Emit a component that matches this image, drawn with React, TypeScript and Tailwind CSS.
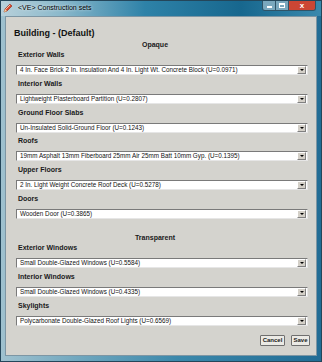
import React from "react";

const opaque: [string, string][] = [
  ["Exterior Walls", "4 In. Face Brick 2 In. Insulation And 4 In. Light Wt. Concrete Block (U=0.0971)"],
  ["Interior Walls", "Lightweight Plasterboard Partition (U=0.2807)"],
  ["Ground Floor Slabs", "Un-Insulated Solid-Ground Floor (U=0.1243)"],
  ["Roofs", "19mm Asphalt 13mm Fiberboard 25mm Air 25mm Batt 10mm Gyp. (U=0.1395)"],
  ["Upper Floors", "2 In. Light Weight Concrete Roof Deck (U=0.5278)"],
  ["Doors", "Wooden Door (U=0.3865)"],
];

const transparent: [string, string][] = [
  ["Exterior Windows", "Small Double-Glazed Windows (U=0.5584)"],
  ["Interior Windows", "Small Double-Glazed Windows (U=0.4335)"],
  ["Skylights", "Polycarbonate Double-Glazed Roof Lights (U=0.6569)"],
];

function Combo({ text }: { text: string }) {
  return (
    <div className="mt-[5px] h-[10px] flex items-center bg-white border border-t-[#7a7a7a] border-l-[#7a7a7a] border-b-[#e6e6e6] border-r-[#e6e6e6]">
      <div className="flex-1 pl-[3px] text-[6.3px] leading-[8px] text-[#111] whitespace-nowrap overflow-hidden">{text}</div>
      <div className="w-[9px] h-[8px] mr-[1px] bg-[#d4d0c8] border border-t-white border-l-white border-b-[#808080] border-r-[#808080] flex items-center justify-center">
        <div className="w-0 h-0 border-l-[2px] border-r-[2px] border-t-[2px] border-l-transparent border-r-transparent border-t-black" />
      </div>
    </div>
  );
}

function Group({ label, value }: { label: string; value: string }) {
  return (
    <div className="flex flex-col">
      <div className="h-[10px] leading-[10px] pl-[2px] text-[7px] font-bold text-[#1a1a1a] whitespace-nowrap">{label}</div>
      <Combo text={value} />
    </div>
  );
}

export default function App() {
  return (
    <div
      className="w-[322px] h-[362px] flex flex-col border border-[#24465a] bg-[linear-gradient(to_right,#9fc1cf_0%,#6ea6be_25%,#3b88ab_55%,#216c95_100%)]"
      style={{ fontFamily: '"Liberation Sans", Arial, sans-serif' }}
    >
      <div className="h-[15px] flex items-start bg-[linear-gradient(to_right,#b7d0da_0%,#8dbacc_18%,#2e82a8_45%,#17678e_75%,#3a89ad_100%)]">
        <svg width="10" height="10" viewBox="0 0 10 10" className="ml-[2px] mt-[2px] shrink-0">
          <path d="M1 9 L2 6 L7 1 L9 3 L4 8 Z" fill="#d9462c" stroke="#8a2a1a" strokeWidth="0.6" />
          <path d="M2.5 6.5 L7.2 1.8" stroke="#ffe3c8" strokeWidth="0.8" />
          <path d="M1 9 L2 6 L4 8 Z" fill="#f2d2a0" />
        </svg>
        <div className="ml-[5px] mt-[2px] text-[7px] leading-[10px] text-black whitespace-nowrap [text-shadow:0_0_3px_rgba(255,255,255,0.9)]">
          &lt;VE&gt; Construction sets
        </div>
        <div className="ml-auto mr-[5px] flex h-[10px] rounded-b-[3px] overflow-hidden border border-t-0 border-[#2f5468]">
          <div className="w-[13px] h-full bg-[#7aa8be] border-r border-[#2f5468] flex items-end justify-center pb-[2px]">
            <div className="w-[5px] h-[2px] bg-white" />
          </div>
          <div className="w-[13px] h-full bg-[#7aa8be] border-r border-[#2f5468] flex items-center justify-center">
            <div className="w-[6px] h-[5px] border border-white border-t-2" />
          </div>
          <div className="w-[26px] h-full bg-[#cc4634] flex items-center justify-center">
            <span className="text-[8px] leading-[8px] font-bold text-white">x</span>
          </div>
        </div>
      </div>
      <div className="flex-1 mx-[4px] mb-[5px] bg-[#d4d3ce] border border-[#7d96a4] flex flex-col">
        <div className="pt-[10px] pl-[8px] h-[22px] text-[9px] leading-[12px] font-bold text-[#111]">
          Building - (Default)
        </div>
        <div className="mt-[1px] h-[10px] leading-[10px] text-[7px] font-bold text-center pr-[12px] text-[#1a1a1a]">
          Opaque
        </div>
        <div className="flex flex-col gap-[3.8px] pl-[10px] pr-[8px]">
          {opaque.map(([l, v]) => (
            <Group key={l} label={l} value={v} />
          ))}
        </div>
        <div className="mt-[14px] h-[10px] leading-[10px] text-[7px] font-bold text-center pr-[12px] text-[#1a1a1a]">
          Transparent
        </div>
        <div className="flex flex-col gap-[3.8px] pl-[10px] pr-[8px]">
          {transparent.map(([l, v]) => (
            <Group key={l} label={l} value={v} />
          ))}
        </div>
        <div className="mt-[9px] flex justify-end gap-[6px] pr-[6px]">
          <div className="w-[25px] h-[11px] flex items-center justify-center bg-[#ebeae5] border border-[#6f6f6f] rounded-[1px] text-[6px] font-bold text-[#222]">
            Cancel
          </div>
          <div className="w-[19px] h-[11px] flex items-center justify-center bg-[#ebeae5] border border-[#6f6f6f] rounded-[1px] text-[6px] font-bold text-[#222]">
            Save
          </div>
        </div>
      </div>
    </div>
  );
}
